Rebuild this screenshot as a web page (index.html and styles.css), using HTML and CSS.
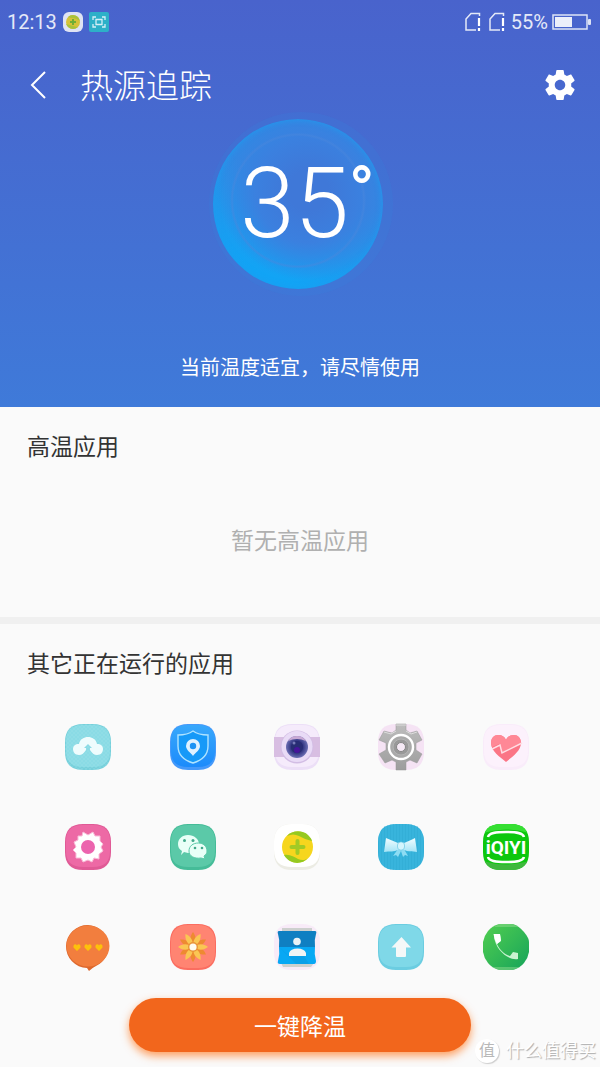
FILE: index.html
```html
<!DOCTYPE html>
<html lang="zh-CN">
<head>
    <meta charset="UTF-8">
    <meta name="viewport" content="width=device-width, initial-scale=1.0">
    <title>热源追踪</title>
    <link rel="stylesheet" href="styles.css">
</head>
<body>
    <!-- 公用图形 -->
    <svg class="defs" aria-hidden="true">
        <defs>
            <path id="tile" d="M18 0H28C40 0 46 6 46 18V28C46 40 40 46 28 46H18C6 46 0 40 0 28V18C0 6 6 0 18 0Z"/>
            <path id="face" d="M18 1H28C39 1 45 6 45 17V27C45 38 39 43 28 43H18C7 43 1 38 1 27V17C1 6 7 1 18 1Z"/>
            <clipPath id="tileClip"><use href="#tile"/></clipPath>
            <linearGradient id="gBlue" x1="0" y1="0" x2="0" y2="1"><stop offset="0" stop-color="#38a8fb"/><stop offset="1" stop-color="#1c8bfb"/></linearGradient>
            <linearGradient id="gMetal" x1="0" y1="0" x2="0" y2="1"><stop offset="0" stop-color="#bdbdbd"/><stop offset="1" stop-color="#9d9d9d"/></linearGradient>
            <linearGradient id="gPhone" x1="0" y1="0" x2="1" y2="1"><stop offset="0" stop-color="#52cf50"/><stop offset="1" stop-color="#16a35a"/></linearGradient>
            <linearGradient id="gBow" x1="0" y1="0" x2="0" y2="1"><stop offset="0" stop-color="#f2fdff"/><stop offset="1" stop-color="#a5e4f6"/></linearGradient>
            <radialGradient id="gLens"><stop offset="0" stop-color="#3a0f8a"/><stop offset=".5" stop-color="#2b2f7c"/><stop offset="1" stop-color="#6d70b4"/></radialGradient>
            <pattern id="dots" width="4" height="4" patternUnits="userSpaceOnUse"><circle cx="1" cy="1" r=".7" fill="#a2e5ec"/><circle cx="3" cy="3" r=".7" fill="#a2e5ec"/></pattern>
            <pattern id="stripes" width="3" height="4" patternUnits="userSpaceOnUse"><path d="M0 0H1V4H0Z" fill="#2ea9d1"/></pattern>
        </defs>
    </svg>

    <header class="hero">
        <div class="status-bar">
            <div class="status-group">
                <span>12:13</span>
                <svg class="status-app" viewBox="0 0 20 20">
                    <rect width="20" height="20" rx="6" fill="#dfe3f3"/>
                    <circle cx="10" cy="10" r="7" fill="#d6c238"/>
                    <path d="M5 5Q9 1 15 5L17 9Q13 6 10 6T5 5ZM3 12Q7 13 10 14T15 15Q10 19 5 15Z" fill="#a8c23a"/>
                    <path d="M10 7V13M7 10H13" stroke="#6fae35" stroke-width="2"/>
                </svg>
                <svg class="status-app" viewBox="0 0 20 20">
                    <rect width="20" height="20" rx="2" fill="#2db0c8"/>
                    <path d="M4 8V5H7M13 5H16V8M16 12V15H13M7 15H4V12M7 7.500H13V12.500H7Z" fill="none" stroke="#d5eff6" stroke-width="1.300"/>
                </svg>
            </div>
            <div class="status-group right">
                <svg class="sim" viewBox="0 0 16 20"><path d="M11 18H1V7L6 1.500H14.500V4" fill="none" stroke="#e4e9f8" stroke-width="1.500"/><path d="M14 6V14M14 16V19" stroke="#fff" stroke-width="2.200"/></svg>
                <svg class="sim" viewBox="0 0 16 20"><path d="M11 18H1V7L6 1.500H14.500V4" fill="none" stroke="#e4e9f8" stroke-width="1.500"/><path d="M14 6V14M14 16V19" stroke="#fff" stroke-width="2.200"/></svg>
                <span class="percent">55%</span>
                <svg class="battery" viewBox="0 0 40 16"><rect x="1" y="1" width="34" height="14" fill="none" stroke="#dde3f6" stroke-width="1.500"/><rect x="3" y="3" width="17" height="10" fill="#eceffa"/><rect x="36" y="5" width="3" height="6" rx="1" fill="#dde3f6"/></svg>
            </div>
        </div>

        <nav class="title-bar">
            <button class="icon-btn" aria-label="返回">
                <svg width="16" height="28" viewBox="0 0 16 28"><path d="M15 1L2 14L15 27" fill="none" stroke="#fff" stroke-width="2"/></svg>
            </button>
            <h1>热源追踪</h1>
            <button class="icon-btn" aria-label="设置">
                <svg width="36" height="36" viewBox="0 0 24 24"><path fill="#fff" d="M19.430 12.980c.04-.32.07-.64.07-.98s-.03-.66-.07-.98l2.110-1.650c.19-.15.24-.42.12-.64l-2-3.460c-.12-.22-.39-.3-.61-.22l-2.490 1c-.52-.4-1.080-.73-1.690-.98l-.38-2.650C14.460 2.180 14.250 2 14 2h-4c-.25 0-.46.18-.49.42l-.38 2.650c-.61.25-1.170.59-1.690.98l-2.490-1c-.23-.09-.49 0-.61.22l-2 3.460c-.13.22-.07.49.12.64l2.110 1.650c-.04.32-.07.65-.07.98s.03.66.07.98l-2.110 1.650c-.19.15-.24.42-.12.64l2 3.460c.12.22.39.3.61.22l2.490-1c.52.4 1.080.73 1.690.98l.38 2.650c.03.24.24.42.49.42h4c.25 0 .46-.18.49-.42l.38-2.650c.61-.25 1.170-.59 1.690-.98l2.490 1c.23.09.49 0 .61-.22l2-3.460c.12-.22.07-.49-.12-.64l-2.110-1.650zM12 15.500c-1.930 0-3.500-1.570-3.500-3.500s1.570-3.500 3.500-3.500 3.500 1.570 3.500 3.500-1.570 3.500-3.500 3.500z"/></svg>
            </button>
        </nav>

        <div class="dial">
            <span class="degrees">35</span><span class="degree-mark">°</span>
        </div>
        <p class="hint">当前温度适宜，请尽情使用</p>
    </header>

    <main>
        <section class="hot-apps">
            <h2>高温应用</h2>
            <p class="empty">暂无高温应用</p>
        </section>

        <section class="running-apps">
            <h2>其它正在运行的应用</h2>
            <ul class="app-grid">
                <li>
                    <svg viewBox="0 0 46 46">
                        <use href="#tile" fill="#77d0db"/><use href="#face" fill="#8adbe5"/>
                        <use href="#tile" fill="url(#dots)" opacity=".6"/>
                        <path d="M14 31C10 31 8 28 8 25S10 20 14 20C15 15 19 13 23 13S31 15 32 20C36 20 38 22 38 25S36 31 32 31C29 31 27 29 25 26H25V24H27L23 20L19 24H21V26C19 29 17 31 14 31Z" fill="#effcfd"/>
                    </svg>
                </li>
                <li>
                    <svg viewBox="0 0 46 46">
                        <use href="#tile" fill="#4599fa"/><use href="#face" fill="url(#gBlue)"/>
                        <path d="M23 7C27 10 32 11 38 11V22C38 31 33 36 23 39C13 36 8 31 8 22V11C14 11 19 10 23 7Z" fill="#1699f8" stroke="#aee3ff" stroke-width="1.400"/>
                        <path d="M23 15A7 7 0 0 1 30 22C30 26 25 29 23 32C21 29 16 26 16 22A7 7 0 0 1 23 15Z" fill="#dff1ff"/><circle cx="23" cy="22" r="3.200" fill="#1c93f5"/>
                    </svg>
                </li>
                <li>
                    <svg viewBox="0 0 46 46">
                        <use href="#tile" fill="#ecdff7"/><use href="#face" fill="#f5ebfb"/>
                        <rect y="13" width="46" height="20" fill="#d8bee2"/>
                        <circle cx="23" cy="23" r="16.500" fill="#d2bde4"/><circle cx="23" cy="22.500" r="15.500" fill="#e9dbf6"/>
                        <circle cx="23" cy="23" r="11" fill="url(#gLens)"/><path d="M14 17Q17 12 23 12T32 17Q23 13 14 17Z" fill="#c8a9d4"/><circle cx="23" cy="23" r="6" fill="#282d74"/><circle cx="23" cy="26" r="3" fill="#46149b"/><circle cx="20" cy="19" r="1.500" fill="#777bb8"/>
                    </svg>
                </li>
                <li>
                    <svg viewBox="0 0 46 46">
                        <use href="#tile" fill="#f5e3f4"/>
                        <path d="M18 0H28V6L32 9L39 7L44 16L38 19V26L44 30L39 39L32 36L28 38V46H18V38L14 36L7 39L1 30L8 26V19L1 16L6 7L14 9L18 6Z" fill="url(#gMetal)" stroke="#969696" stroke-width=".5"/>
                        <path d="M18 1H28M6 8L13 10L18 7M28 7L33 10L39 8" fill="none" stroke="#ddd" stroke-width="1"/>
                        <circle cx="23" cy="23" r="12" fill="#a9a9a9" stroke="#fff" stroke-width="2.400"/>
                        <circle cx="23" cy="23" r="8" fill="#999" stroke="#b5b5b5"/><circle cx="23" cy="23" r="4.500" fill="#f5e9f5" stroke="#858585"/>
                    </svg>
                </li>
                <li>
                    <svg viewBox="0 0 46 46">
                        <use href="#tile" fill="#f9ecfa"/><use href="#face" fill="#fcf1fc"/>
                        <path d="M23 38C17 33 8 27 8 19C8 14 11 11 15 11C19 11 22 13 23 16C24 13 27 11 31 11C35 11 38 14 38 19C38 27 29 33 23 38Z" fill="#fb7586"/>
                        <path d="M23 16C22 13 19 11 15 11C11 11 8 14 8 19L9 23L16 20L19 29L38 19C38 14 35 11 31 11C27 11 24 13 23 16Z" fill="#ff8896"/>
                        <path d="M9 25L17 21L19 29L39 19" fill="none" stroke="#ffdde4" stroke-width="1.500"/>
                    </svg>
                </li>
                <li>
                    <svg viewBox="0 0 46 46">
                        <use href="#tile" fill="#e05a96"/><use href="#face" fill="#ed69a5"/>
                        <path d="M18 8L23 11L28 8L30 12L35 12V17L38 20L36 23L38 27L34 30V35L29 34L27 38L23 36L18 38L16 34L11 34V29L8 26L11 23L9 18L13 16V12L17 12Z" fill="#fff" stroke="#f9bcd8" stroke-width="1"/>
                        <circle cx="23" cy="23" r="7" fill="#ec64ae"/>
                    </svg>
                </li>
                <li>
                    <svg viewBox="0 0 46 46">
                        <use href="#tile" fill="#45bc98"/><use href="#face" fill="#5bc9a8"/>
                        <path d="M18 11C24 11 29 15 29 20S24 29 18 29L14 28L11 31L12 27C9 25 8 23 8 20C8 15 12 11 18 11Z" fill="#e9fff7"/>
                        <path d="M28.500 19C33 19 37 22 37 27C37 29 36 31 34 32L35 35L31 34C24 35 19 32 19 27C19 22 23 19 28.500 19Z" fill="#e9fff7" stroke="#5bc9a8"/>
                        <g fill="#43a98a"><circle cx="14.500" cy="16.500" r="1.500"/><circle cx="23" cy="16.500" r="1.500"/><circle cx="25" cy="24" r="1.300"/><circle cx="32" cy="24" r="1.300"/></g>
                    </svg>
                </li>
                <li>
                    <svg viewBox="0 0 46 46">
                        <use href="#tile" fill="#ecece4"/><path d="M18 0H28C40 0 46 6 46 18V25C46 38 40 43 28 43H18C6 43 0 38 0 25V18C0 6 6 0 18 0Z" fill="#fff"/>
                        <circle cx="23.500" cy="23" r="15.500" fill="#f6d61e"/>
                        <path d="M13 12C18 6 29 6 34 11Q38 15 38 17C33 16 29 14 25 12S17 10 13 12ZM10 31C16 30 20 33 24 35S32 36 34 34C28 41 16 41 10 31Z" fill="#95c91f"/>
                        <path d="M23.500 17V29M17.500 23H29.500" stroke="#a2ca25" stroke-width="4" stroke-linecap="round"/>
                    </svg>
                </li>
                <li>
                    <svg viewBox="0 0 46 46">
                        <use href="#tile" fill="#38b4dc"/><use href="#tile" fill="url(#stripes)" opacity=".5"/>
                        <path d="M20 25L15 32L18 31L20 33L23 27L25 33L27 31L30 32L26 25Z" fill="#8ddcf3"/>
                        <path d="M8 14C12 16 16 17 20 19H26C30 17 34 16 37 14L39 28C34 27 30 28 26 26H20C16 28 12 27 6 28Z" fill="url(#gBow)"/>
                        <rect x="19.500" y="18" width="7" height="8" rx="3" fill="#d4f5fd" stroke="#6bc7e3" stroke-width=".7"/>
                    </svg>
                </li>
                <li>
                    <svg viewBox="0 0 46 46">
                        <g clip-path="url(#tileClip)">
                            <rect width="46" height="46" fill="#0cc70e"/><path d="M0 0H46V9Q23 2 0 9Z" fill="#35df32"/><path d="M0 46V37Q23 44 46 37V46Z" fill="#3fb83e"/>
                        </g>
                        <path d="M5 13C6 9 12 8 23 8S40 9 41 13M5 33C6 37 12 38 23 38S40 37 41 33" fill="none" stroke="#fff" stroke-width="2.500"/>
                        <text class="iqiyi" x="23" y="30" text-anchor="middle">iQIYI</text>
                    </svg>
                </li>
                <li>
                    <svg viewBox="0 0 46 46">
                        <path d="M23 1A21.500 21.500 0 0 1 31 42Q27 44 24 47L22 44A21.500 21.500 0 0 1 23 1Z" fill="#de682d"/><ellipse cx="23" cy="22" rx="21.500" ry="20.500" fill="#f27e3e"/>
                        <g fill="#fdc10b"><path id="heart" d="M12 27L8.500 23.500C8 20 11 19.500 12 21.500C13 19.500 16 20 15.500 23.500Z"/><use href="#heart" x="11"/><use href="#heart" x="22"/></g>
                    </svg>
                </li>
                <li>
                    <svg viewBox="0 0 46 46">
                        <use href="#tile" fill="#fb6d60"/><path d="M18 1H28C39 1 45 7 45 18V28C45 39 39 44 28 44H18C7 44 1 39 1 28V18C1 7 7 1 18 1Z" fill="#ff8472"/>
                        <g fill="#ee8a31">
                            <path id="petal" d="M23 22C19 17 20 12 23 8C26 12 27 17 23 22Z"/>
                            <use href="#petal" transform="rotate(60 23 23)"/><use href="#petal" transform="rotate(120 23 23)"/><use href="#petal" transform="rotate(180 23 23)"/><use href="#petal" transform="rotate(240 23 23)"/><use href="#petal" transform="rotate(300 23 23)"/>
                        </g>
                        <g fill="#fac653">
                            <path id="petalFront" d="M23 22C19 17 20 12 23 8C26 12 27 17 23 22Z" transform="rotate(30 23 23)"/>
                            <use href="#petalFront" transform="rotate(60 23 23)"/><use href="#petalFront" transform="rotate(120 23 23)"/><use href="#petalFront" transform="rotate(180 23 23)"/><use href="#petalFront" transform="rotate(240 23 23)"/><use href="#petalFront" transform="rotate(300 23 23)"/>
                        </g>
                        <circle cx="23" cy="23" r="5" fill="#e9953a"/><circle cx="23" cy="23" r="3.600" fill="#fffbef"/>
                    </svg>
                </li>
                <li>
                    <svg viewBox="0 0 46 46">
                        <use href="#tile" fill="#f8ebf8"/><path d="M8 4H38V8H8ZM7 39H40L37 43H9Z" fill="#cdd0ce"/>
                        <path d="M5 7H41Q43 7 42 10Q40 16 41 23H5Q6 16 4 10Q3 7 5 7Z" fill="#0f7fc2"/>
                        <path d="M5 23H41Q40 30 42 37Q42 40 40 40H6Q3 40 4 37Q6 30 5 23Z" fill="#08a8f4"/><path d="M5 23L22 40H35L30 32H15Z" fill="#0a9fe8"/>
                        <circle cx="23" cy="17.500" r="3.800" fill="#e9f2f6"/><path d="M15 32V29C16 26 19 24.500 23.500 24.500S31 26 32 29V32Z" fill="#f1f4f5"/>
                    </svg>
                </li>
                <li>
                    <svg viewBox="0 0 46 46">
                        <use href="#tile" fill="#6bcde1"/><use href="#face" fill="#7fd8e8"/>
                        <path d="M23.500 13L33 23.500H28V32Q28 33 27 33H19Q18 33 18 32V23.500H13.500Z" fill="#f5f8f8"/>
                    </svg>
                </li>
                <li>
                    <svg viewBox="0 0 46 46">
                        <path d="M16 0H30Q36 2 41 8T46 18V28Q45 34 41 39T30 46H16Q9 44 5 39T0 28V18Q1 12 5 7T16 0Z" fill="url(#gPhone)"/>
                        <path d="M11 3L16 0H30L35 3ZM9 43H37L30 46H16Z" fill="#8edb8d" opacity=".5"/>
                        <path d="M14 20C17 26 21 30 27 32L30 28L35 29V35C26 37 12 26 11 12L17 10L18 16Z" fill="#c9f3d1"/><path d="M10.500 10H17L18 17L14 20Q11 15 10.500 10Z" fill="#fff"/>
                    </svg>
                </li>
            </ul>
        </section>
    </main>

    <footer class="action-bar">
        <button class="cool-btn">一键降温</button>
        <div class="watermark"><span class="watermark-logo">值</span>什么值得买</div>
    </footer>
</body>
</html>
```
FILE: styles.css
```css
:root {
    --page-bg: #fafafa;
    --text-color: #333;
    --muted-color: #b0b0b0;
    --action-color: #f2661c;
}

* {
    box-sizing: border-box;
    margin: 0;
    padding: 0;
}

body {
    display: flex;
    flex-direction: column;
    min-height: 100vh;
    font-family: Roboto, 'Noto Sans CJK SC', sans-serif;
    background: var(--page-bg);
    color: var(--text-color);
}

button {
    border: none;
    background: none;
    font-family: inherit;
    cursor: pointer;
}

svg {
    display: block;
}

.defs {
    position: absolute;
    width: 0;
    height: 0;
}

/* 顶部温度区域 */
.hero {
    display: flex;
    flex-direction: column;
    padding-bottom: 24px;
    background: linear-gradient(#4963cc, #3f7ad9);
    color: #fff;
}

.status-bar {
    display: flex;
    justify-content: space-between;
    align-items: center;
    height: 44px;
    padding: 0 8px 0 7px;
    font-size: 20px;
    color: #e4e9f8;
}

.status-group {
    display: flex;
    align-items: center;
    gap: 6px;
}

.status-group.right {
    gap: 4px;
}

.status-app {
    width: 20px;
    height: 20px;
}

.sim {
    width: 20px;
    height: 20px;
}

.battery {
    width: 40px;
    height: 16px;
}

.title-bar {
    display: flex;
    align-items: center;
    height: 82px;
    padding: 0 22px;
}

.icon-btn {
    display: flex;
    align-items: center;
    justify-content: center;
    min-width: 32px;
    height: 48px;
}

.title-bar h1 {
    flex: 1;
    padding: 4px 0 0 26px;
    font-size: 33px;
    font-weight: 300;
    line-height: 44px;
}

.dial {
    align-self: center;
    display: flex;
    justify-content: center;
    width: 170px;
    height: 170px;
    margin: -7px 4px 0 0;
    padding: 36px 0 0 19px;
    border-radius: 50%;
    background:
        radial-gradient(circle at 50% 48%, transparent 64px, rgba(75, 135, 220, 0.5) 66px, transparent 68px),
        radial-gradient(circle at 56% 42%, #3f78d8 20px, #3b80df 52px, rgba(59, 128, 223, 0) 90px),
        linear-gradient(20deg, #12a4f5 15%, #2f8ae4 60%);
    box-shadow: inset 0 0 6px #1d9cf0, 3px 0 0 7px rgba(50, 140, 225, 0.15);
}

.degrees {
    font-size: 98px;
    font-weight: 300;
    line-height: 98px;
}

.degree-mark {
    margin-top: 2px;
    font-size: 68px;
    font-weight: 500;
    line-height: 70px;
}

.hint {
    margin-top: 64px;
    font-size: 20px;
    line-height: 30px;
    text-align: center;
}

/* 应用列表 */
h2 {
    font-size: 23px;
    font-weight: 400;
    line-height: 32px;
}

.hot-apps {
    padding: 25px 27px 59px;
    border-bottom: 7px solid #f0f0f0;
}

.empty {
    margin-top: 62px;
    font-size: 23px;
    line-height: 32px;
    text-align: center;
    color: var(--muted-color);
}

.running-apps {
    padding: 25px 27px 28px;
}

.app-grid {
    display: grid;
    grid-template-columns: repeat(5, 1fr);
    row-gap: 54px;
    padding: 43px 15px 0 9px;
    list-style: none;
}

.app-grid li {
    display: flex;
    justify-content: center;
}

.app-grid svg {
    width: 46px;
    height: 46px;
    overflow: visible;
}

.iqiyi {
    font-family: 'Liberation Sans Narrow', Roboto, sans-serif;
    font-size: 19px;
    font-weight: 700;
    fill: #fff;
}

/* 底部按钮 */
.action-bar {
    position: relative;
    display: flex;
    justify-content: center;
    padding-bottom: 15px;
}

.cool-btn {
    width: 57%;
    height: 54px;
    border-radius: 27px;
    background: var(--action-color);
    box-shadow: 0 4px 8px rgba(255, 120, 30, 0.7);
    color: #fff;
    font-size: 23px;
}

/* 水印盖在页面右下角 */
.watermark {
    position: absolute;
    right: 4px;
    bottom: 4px;
    display: flex;
    align-items: center;
    gap: 7px;
    font-size: 18px;
    line-height: 24px;
    color: #fff;
    text-shadow: 1px 1px 1px #aaa;
}

.watermark-logo {
    width: 24px;
    height: 24px;
    border-radius: 50%;
    background: #fff;
    box-shadow: 1px 1px 1px #ccc;
    color: #b8b8b8;
    font-size: 16px;
    text-align: center;
    text-shadow: none;
}
```
